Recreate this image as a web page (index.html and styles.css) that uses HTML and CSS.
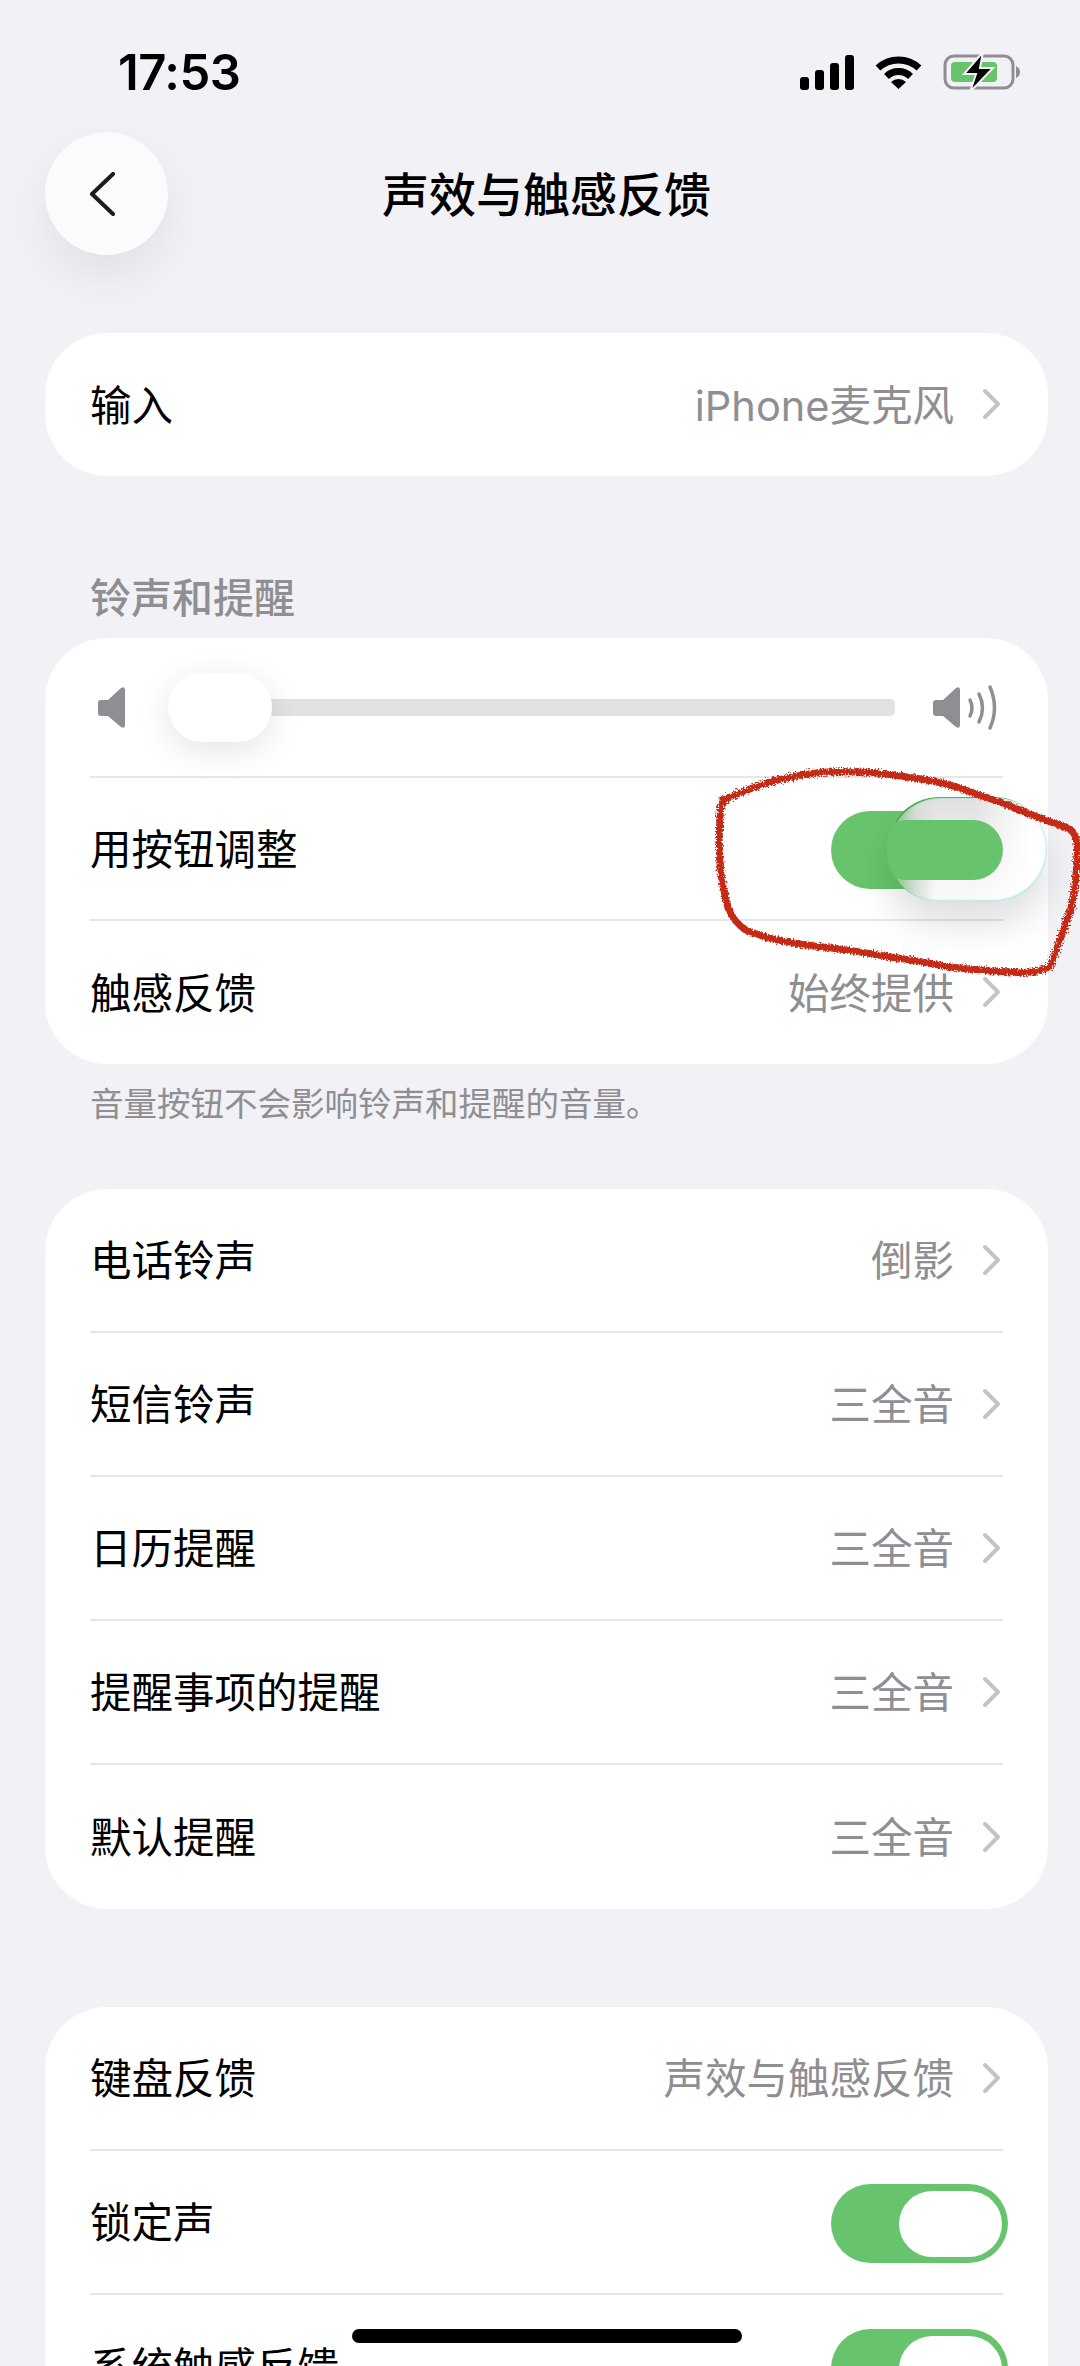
FILE: index.html
```html
<!DOCTYPE html>
<html lang="zh-CN">
<head>
  <meta charset="UTF-8">
  <meta name="viewport" content="width=device-width, initial-scale=1.0">
  <title>声效与触感反馈</title>
  <link rel="stylesheet" href="styles.css">
</head>
<body>
  <div class="page">
    <div class="status-bar">
      <span class="time">17:53</span>
      <div class="status-icons">
        <svg class="signal" width="54" height="35" viewBox="0 0 54 35">
          <rect x="0" y="22" width="9" height="13" rx="3"/>
          <rect x="15" y="15" width="9" height="20" rx="3"/>
          <rect x="30" y="8" width="9" height="27" rx="3"/>
          <rect x="45" y="0" width="9" height="35" rx="3"/>
        </svg>
        <svg class="wifi" width="47" height="34" viewBox="0 0 47 34">
          <path d="M3 13 A30 30 0 0 1 44 13" fill="none" stroke="#000" stroke-width="7"/>
          <path d="M11.500 21.500 A17 17 0 0 1 35.500 21.500" fill="none" stroke="#000" stroke-width="7"/>
          <path d="M16 27 A11 11 0 0 1 31 27 L23.500 34 Z"/>
        </svg>
        <svg class="battery" width="78" height="36" viewBox="0 0 78 36">
          <rect x="2" y="2" width="68" height="32" rx="9" fill="none" stroke="#8e8e93" stroke-width="3"/>
          <rect x="8" y="8" width="46" height="20" rx="4" fill="#67c46c"/>
          <path d="M73 12 Q77 14 77 18 Q77 22 73 24 Z" fill="#8e8e93"/>
          <path d="M40 -2 L21 20 L33 20 L27 38 L50 14 L37 14 Z" fill="#000" stroke="#f1f1f6" stroke-width="2"/>
        </svg>
      </div>
    </div>

    <div class="nav">
      <button class="back">
        <svg width="26" height="44" viewBox="0 0 26 44"><polyline points="24,2 3,22 24,42" fill="none" stroke="#1c1c1e" stroke-width="4" stroke-linecap="round" stroke-linejoin="round"/></svg>
      </button>
      <div class="title">声效与触感反馈</div>
    </div>

    <div class="card card-input">
      <div class="row">
        <span class="label">输入</span>
        <span class="value">iPhone麦克风</span>
        <svg class="chev" width="20" height="32" viewBox="0 0 20 32"><polyline points="3,3 16,16 3,29"/></svg>
      </div>
    </div>

    <div class="section-title">铃声和提醒</div>
    <div class="card card-ringer">
      <div class="row row-slider">
        <svg class="spk-low" width="27" height="41" viewBox="0 0 27 41">
          <path d="M3 13 H10 L23 1 Q27 -1 27 3 V38 Q27 42 23 40 L10 29 H3 Q0 29 0 26 V16 Q0 13 3 13 Z" fill="#8e8e93"/>
        </svg>
        <div class="slider">
          <div class="track"></div>
          <div class="thumb"></div>
        </div>
        <svg class="spk-high" width="64" height="45" viewBox="0 0 64 45">
          <path d="M3 15 H10 L23 3 Q27 1 27 5 V40 Q27 44 23 42 L10 31 H3 Q0 31 0 28 V18 Q0 15 3 15 Z" fill="#8e8e93"/>
          <g fill="none" stroke="#8e8e93" stroke-width="3.500" stroke-linecap="round">
            <path d="M37 15 Q41 23 37 31"/>
            <path d="M46 9 Q53 23 46 37"/>
            <path d="M57 2 Q66 23 57 43"/>
          </g>
        </svg>
      </div>
      <div class="row">
        <span class="label">用按钮调整</span>
        <div class="switch-live">
          <div class="lens"><div class="lens-core"></div></div>
        </div>
      </div>
      <div class="row">
        <span class="label">触感反馈</span>
        <span class="value">始终提供</span>
        <svg class="chev" width="20" height="32" viewBox="0 0 20 32"><polyline points="3,3 16,16 3,29"/></svg>
      </div>
    </div>
    <div class="section-note">音量按钮不会影响铃声和提醒的音量。</div>

    <div class="card card-tones">
      <div class="row">
        <span class="label">电话铃声</span>
        <span class="value">倒影</span>
        <svg class="chev" width="20" height="32" viewBox="0 0 20 32"><polyline points="3,3 16,16 3,29"/></svg>
      </div>
      <div class="row">
        <span class="label">短信铃声</span>
        <span class="value">三全音</span>
        <svg class="chev" width="20" height="32" viewBox="0 0 20 32"><polyline points="3,3 16,16 3,29"/></svg>
      </div>
      <div class="row">
        <span class="label">日历提醒</span>
        <span class="value">三全音</span>
        <svg class="chev" width="20" height="32" viewBox="0 0 20 32"><polyline points="3,3 16,16 3,29"/></svg>
      </div>
      <div class="row">
        <span class="label">提醒事项的提醒</span>
        <span class="value">三全音</span>
        <svg class="chev" width="20" height="32" viewBox="0 0 20 32"><polyline points="3,3 16,16 3,29"/></svg>
      </div>
      <div class="row">
        <span class="label">默认提醒</span>
        <span class="value">三全音</span>
        <svg class="chev" width="20" height="32" viewBox="0 0 20 32"><polyline points="3,3 16,16 3,29"/></svg>
      </div>
    </div>

    <div class="card card-system">
      <div class="row">
        <span class="label">键盘反馈</span>
        <span class="value">声效与触感反馈</span>
        <svg class="chev" width="20" height="32" viewBox="0 0 20 32"><polyline points="3,3 16,16 3,29"/></svg>
      </div>
      <div class="row">
        <span class="label">锁定声</span>
        <div class="switch"><div class="knob"></div></div>
      </div>
      <div class="row">
        <span class="label">系统触感反馈</span>
        <div class="switch"><div class="knob"></div></div>
      </div>
    </div>

    <!-- red pen mark drawn over the screenshot -->
    <svg class="scribble" width="1080" height="2366" viewBox="0 0 1080 2366">
      <filter id="rough" x="-5%" y="-5%" width="110%" height="110%">
        <feTurbulence type="fractalNoise" baseFrequency="0.6" numOctaves="2" seed="4"/>
        <feDisplacementMap in="SourceGraphic" scale="7"/>
      </filter>
      <path filter="url(#rough)" d="M723 800 C742 792 758 785 777 780 C795 776 810 773 827 772 C855 771 885 773 907 777 C928 780 945 783 960 788 C978 795 995 800 1010 806 C1030 815 1052 822 1070 829 C1076 834 1078 842 1077 852 C1077 872 1075 890 1071 908 C1064 928 1058 948 1050 966 C1040 973 1025 973 1010 972 C985 971 965 969 943 966 C915 960 888 957 860 952 C838 948 815 947 793 943 C775 940 760 936 747 931 C738 925 732 918 728 908 C724 893 721 878 720 863 C719 847 719 832 720 817 C720 808 721 803 727 799" fill="none" stroke="#c42c12" stroke-width="7" stroke-linecap="round"/>
    </svg>

    <div class="home-bar"></div>
  </div>
</body>
</html>
```

FILE: styles.css
```css
* { box-sizing: border-box; }
html, body { margin: 0; padding: 0; }
body { font-family: Inter, "Noto Sans CJK SC", sans-serif; color: #000; background: #f1f1f6; }

.page { position: relative; width: 1080px; height: 2366px; overflow: hidden; background: #f1f1f6; }

.status-bar { display: flex; justify-content: space-between; align-items: center; height: 132px; padding: 12px 59px 0 118px; }
.time { font-size: 49px; font-weight: 600; letter-spacing: -0.5px; line-height: 1; }
.status-icons { display: flex; align-items: center; gap: 21px; }
.status-icons svg { display: block; overflow: visible; }

.nav { display: grid; grid-template-columns: 123px 1fr 123px; align-items: center; height: 123px; margin: 0 32px 78px 45px; }
.back { display: flex; align-items: center; justify-content: center; width: 123px; height: 123px; padding: 0 10px 0 0; border: none; border-radius: 50%; background: #fbfbfd; box-shadow: 0 22px 50px rgba(0,0,0,0.07); }
.title { padding-bottom: 4px; text-align: center; font-size: 47px; font-weight: 500; }

.card { margin: 0 32px 0 45px; padding: 0 45px; background: #fff; border-radius: 62px; }
.card-tones { margin-top: 63px; }
.card-system { margin-top: 98px; }

.row { display: flex; align-items: center; height: 144px; padding-bottom: 4px; border-bottom: 2px solid #e6e6e9; font-size: 41.500px; }
.row:last-child { border-bottom: none; }
.card-input .row { height: 143px; }
.card-ringer .row { height: 143px; }
.card-ringer .row-slider { height: 140px; padding-bottom: 0; }
.label { flex: 1; }
.value { color: #8e8e93; }
.chev { flex: none; margin: 3px 1px 0 28px; }
.chev polyline { fill: none; stroke: #c4c4c7; stroke-width: 4; stroke-linecap: round; stroke-linejoin: round; }

.section-title { margin: 98px 0 16px 90px; height: 48px; line-height: 48px; font-size: 41px; font-weight: 500; color: #8e8e93; }
.section-note { margin: 18px 0 0 90px; height: 44px; line-height: 44px; font-size: 33.500px; color: #8e8e93; }

.spk-low { flex: none; margin-left: 8px; }
.slider { position: relative; flex: 1; height: 69px; margin: 0 38px 0 43px; }
.track { position: absolute; left: 60px; right: 0; top: 26px; height: 17px; border-radius: 5px; background: #e2e2e3; }
.thumb { position: absolute; left: 0; top: 0; width: 104px; height: 69px; border-radius: 35px; background: #fff; box-shadow: 0 8px 34px rgba(0,0,0,0.11); }
.spk-high { flex: none; margin-right: 6px; overflow: visible; }

.switch, .switch-live { position: relative; flex: none; margin-top: 6px; background: #67c46c; border-radius: 40px; }
.switch { width: 177px; height: 79px; margin-right: -5px; }
.knob { position: absolute; right: 6px; top: 7px; width: 103px; height: 66px; border-radius: 33px; background: #fff; }

.switch-live { width: 172px; height: 78px; }
.lens { position: absolute; left: 56px; top: -14px; width: 160px; height: 105px; overflow: hidden; border-radius: 52px; background: linear-gradient(90deg, #7fc483 0%, #a5cfa8 10%, #d5ddd5 18%, transparent 30%), linear-gradient(90deg, transparent 55%, #fff 90%), linear-gradient(180deg, #e0e0e0 0%, #ececec 40%, #fbfbfb 100%); box-shadow: inset 2px 1px 1px #4fa94f, inset -1px -2px 2px #b9e6e3, inset 0 2px 2px #c5ebe8, 0 22px 36px rgba(0,0,0,0.13); }
.lens-core { position: absolute; left: -10px; top: 23px; width: 126px; height: 60px; border-radius: 30px; background: #67c46c; }

.scribble { position: absolute; left: 0; top: 0; pointer-events: none; }
.home-bar { position: absolute; left: 352px; top: 2329px; width: 390px; height: 14px; border-radius: 7px; background: #000; }
```
